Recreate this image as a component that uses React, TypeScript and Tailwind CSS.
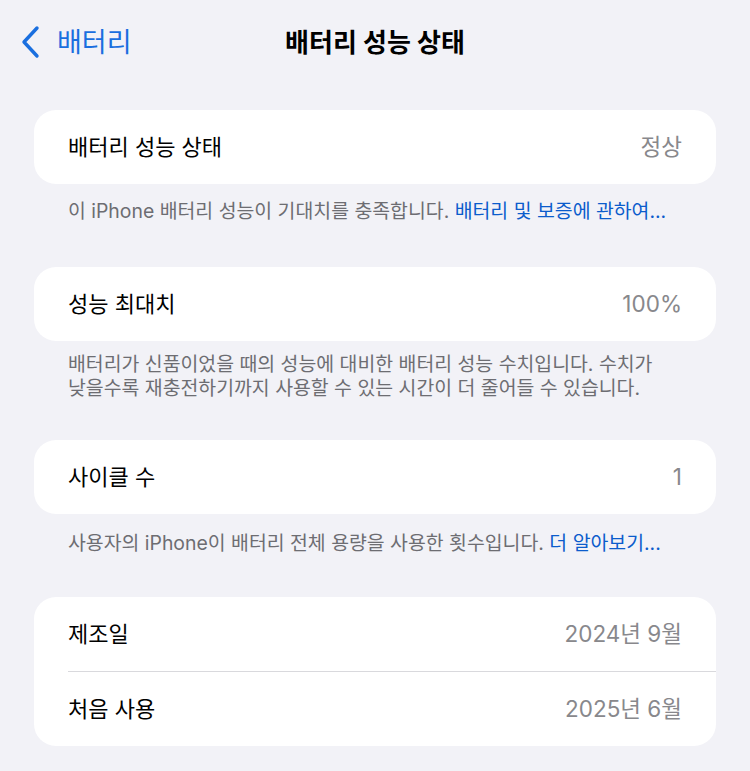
const font = { fontFamily: 'Inter, "Noto Sans CJK KR", sans-serif' };

interface Row {
  label: string;
  value: string;
}

function Card({ rows }: { rows: Row[] }) {
  return (
    <div className="mx-[34px] rounded-[22px] bg-white">
      {rows.map((row, i) => (
        <div key={row.label}>
          {i > 0 && <div className="ml-[34px] h-px bg-[#d9d9dd]" />}
          <div className="flex h-[74px] items-center justify-between px-[34px]">
            <span className="text-[22px] text-black">{row.label}</span>
            <span className="text-[22.5px] text-[#88888c]">{row.value}</span>
          </div>
        </div>
      ))}
    </div>
  );
}

export default function App() {
  return (
    <div className="min-h-[771px] w-[750px] bg-[#f2f2f7] pb-8" style={font}>
      <div className="relative flex h-[84px] items-center">
        <button className="absolute left-[19px] top-[25px] flex items-center text-[#1a6fdf]">
          <svg width="22" height="34" viewBox="0 0 22 34" fill="none">
            <path d="M18 3 L5 17 L18 31" stroke="currentColor" strokeWidth="3.4" strokeLinecap="round" strokeLinejoin="round" />
          </svg>
          <span className="ml-[16px] text-[27px] leading-none">배터리</span>
        </button>
        <h1 className="w-full text-center text-[26px] font-bold text-black">배터리 성능 상태</h1>
      </div>

      <div className="pt-[26px]">
        <Card rows={[{ label: '배터리 성능 상태', value: '정상' }]} />
        <p className="px-[68px] pb-[44px] pt-[15px] text-[19.4px] leading-[24px] text-[#6d6d72]">
          이 iPhone 배터리 성능이 기대치를 충족합니다.{' '}
          <span className="text-[#0b5ccc]">배터리 및 보증에 관하여...</span>
        </p>

        <Card rows={[{ label: '성능 최대치', value: '100%' }]} />
        <p className="px-[68px] pb-[40px] pt-[11px] text-[19.4px] leading-[24px] text-[#6d6d72]">
          배터리가 신품이었을 때의 성능에 대비한 배터리 성능 수치입니다. 수치가
          <br />
          낮을수록 재충전하기까지 사용할 수 있는 시간이 더 줄어들 수 있습니다.
        </p>

        <Card rows={[{ label: '사이클 수', value: '1' }]} />
        <p className="px-[68px] pb-[42px] pt-[17px] text-[19.4px] leading-[24px] text-[#6d6d72]">
          사용자의 iPhone이 배터리 전체 용량을 사용한 횟수입니다.{' '}
          <span className="text-[#0b5ccc]">더 알아보기...</span>
        </p>

        <Card
          rows={[
            { label: '제조일', value: '2024년 9월' },
            { label: '처음 사용', value: '2025년 6월' },
          ]}
        />
      </div>
    </div>
  );
}
